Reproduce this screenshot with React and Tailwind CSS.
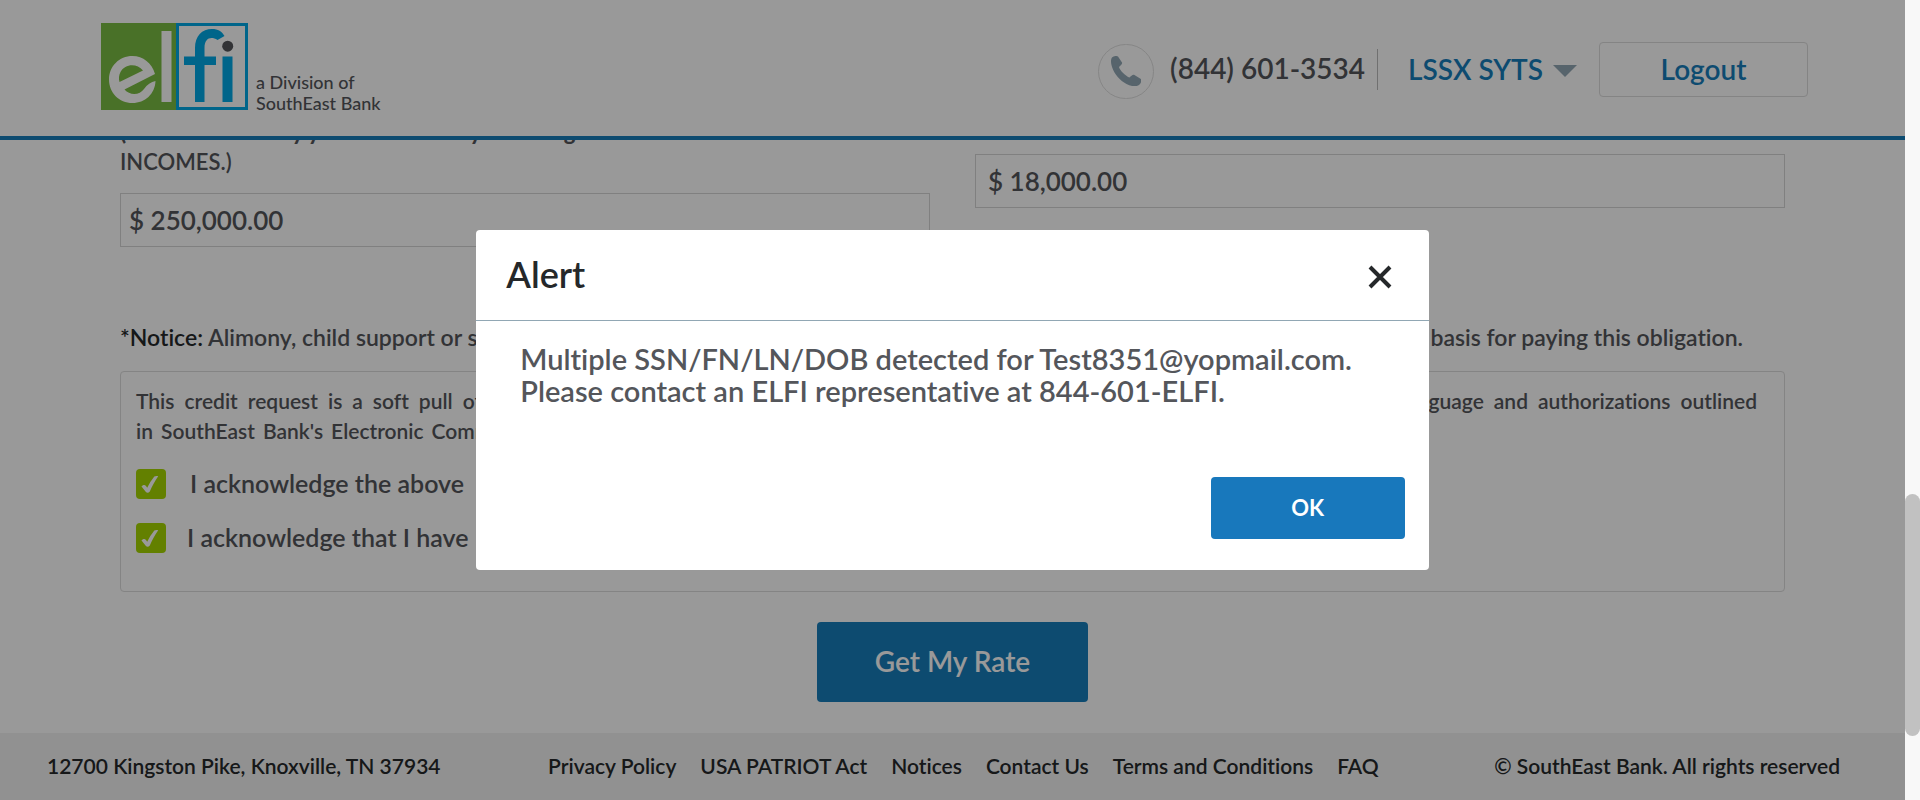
function Logo() {
  return (
    <svg viewBox="0 0 147 87" className="h-[87px] w-[147px] shrink-0" role="img" aria-label="elfi">
      <rect x="0" y="0" width="76" height="87" fill="#7bbc43" />
      <rect x="76.5" y="1.5" width="69" height="84" fill="#fff" stroke="#00a8e6" strokeWidth="3" />
      <rect x="60.5" y="8" width="10" height="71" fill="#fff" />
      <path
        fillRule="evenodd"
        fill="#fff"
        d="M31.500 33 C42 33 51 40 54 51 L23.500 66.500 C29 73 39 72 43 66 C46 61.500 50 59 54.500 58 C54 71 44 80 31.500 80 C18 80 8 69.500 8 56.500 C8 43.500 18 33 31.500 33 Z M18.500 59 L42 47.500 C36 40 24 40.500 19.500 49 C17.800 52.500 17.600 55.500 18.500 59 Z"
      />
      <path
        fill="#00a8e6"
        d="M94 79 V42 H83 V33.500 H94 V25 C94 13 101 6 111 6 C117 6 121 8.500 123.500 13 L116.500 17 C110 13 103.500 15 103.500 25 V33.500 H115 V42 H103.500 V79 Z"
      />
      <rect x="121.500" y="33.500" width="10" height="45.500" fill="#00a8e6" />
      <circle cx="126.700" cy="23.200" r="5.500" fill="#54565b" />
    </svg>
  );
}

function Acknowledge({ id, label, gap }) {
  return (
    <div className="flex items-center">
      <span className="relative flex size-[30px] shrink-0">
        <input id={id} type="checkbox" defaultChecked className="size-[30px] appearance-none rounded bg-[#a5d500]" />
        <svg viewBox="0 0 30 30" className="pointer-events-none absolute inset-0 size-[30px]" aria-hidden="true">
          <path d="M5.500 17.500 C7 15.600 8.800 15.500 10 17 L11.200 18.700 C13.300 14.500 15.500 11 18.300 7.500 C19.500 6.800 20.800 6.800 22.200 7.200 C18.700 12.300 16.200 17 13.800 22.500 C12.500 24.200 10.800 24.200 9.700 22.700 Z" fill="#fff" />
        </svg>
      </span>
      <label htmlFor={id} className={gap + ' pb-0.5 text-[25px] leading-7 whitespace-nowrap'}>{label}</label>
    </div>
  );
}

const links = ['Privacy Policy', 'USA PATRIOT Act', 'Notices', 'Contact Us', 'Terms and Conditions', 'FAQ'];

export default function App() {
  return (
    <div className="flex h-screen overflow-hidden bg-white font-['Lato','Liberation_Sans',sans-serif] font-semibold text-[#54565b] [font-variant-ligatures:none]">
      <div className="relative flex min-w-0 flex-1 flex-col">
        <header className="relative z-10 flex h-[140px] shrink-0 items-start justify-between border-b-4 border-[#177dbb] bg-white pr-[97px] pl-[101px]">
          <a href="#home" className="flex items-start gap-2 pt-[23px]">
            <Logo />
            <span className="pt-[49px] text-[18px] leading-[21px] font-medium whitespace-nowrap">
              a Division of
              <br />
              SouthEast Bank
            </span>
          </a>
          <div className="mt-[41px] flex h-14 items-center">
            <span className="mt-1 flex h-[55px] w-14 items-center justify-center rounded-full border border-[#dfdfdf]">
              <svg viewBox="0 0 30 30" className="size-[30px]" fill="#91a7b4" aria-hidden="true">
                <path d="M1 1.500 C2.500 0 5.500 -0.500 7 0.500 L11 6.500 C11.700 8 9.500 9.500 8 11 C8.500 14 15 20.500 18.500 21.500 C20 20 21.500 18.300 23 18.700 L29.500 22.700 C31 24 30.300 27 28 29 C25.500 31 20 30.500 15.500 28 C9 24.500 3.500 18.500 1.200 11.500 C-0.200 7.500 -0.500 3.500 1 1.500 Z" />
              </svg>
            </span>
            <a href="tel:8446013534" className="ml-4 pb-0.5 text-[28px] leading-8 whitespace-nowrap">(844) 601-3534</a>
            <span className="ml-3 h-[41px] w-px bg-[#bbb]" />
            <button type="button" className="ml-[30px] flex items-center gap-2.5 text-[28px] leading-8 whitespace-nowrap text-[#177dbb]">
              LSSX SYTS
              <svg viewBox="0 0 24 12" className="mt-1 h-3 w-6" aria-hidden="true">
                <path d="M0 0h24L12 12z" fill="#91a7b4" />
              </svg>
            </button>
            <button type="button" className="ml-[22px] h-[55px] w-[209px] rounded border border-[#dcdcdc] text-[28px] leading-8 text-[#177dbb]">
              Logout
            </button>
          </div>
        </header>

        <main className="flex flex-1 flex-col px-[120px]">
          <div className="-mt-[23px] grid grid-cols-2 gap-x-[45px]">
            <div>
              <label htmlFor="income" className="block text-[22px] leading-[30px]">
                <b>(Please add money you earn annually including</b>
                <br />
                INCOMES.)
              </label>
              <input id="income" defaultValue="$ 250,000.00" className="mt-4 h-[54px] w-full border border-[#d5d5d5] px-2 text-[26px]" />
            </div>
            <div className="pt-[37px]">
              <input aria-label="Monthly payment" defaultValue="$ 18,000.00" className="h-[54px] w-full border border-[#d5d5d5] px-3 text-[26px]" />
            </div>
          </div>

          <div className="mt-[75px] flex justify-between pr-[42px] text-[23px] leading-[30px] whitespace-nowrap">
            <p>
              <span className="text-[#25282a]">*Notice:</span> Alimony, child support or separate
            </p>
            <p>basis for paying this obligation.</p>
          </div>

          <section className="mt-[19px] rounded border border-[#dcdcdc] px-[15px] pt-3.5 pb-[38px]">
            <p className="pr-3 text-[21px] leading-[30px] [text-align-last:justify]">
              This credit request is a soft pull of your credit and will not impact your credit score. By submitting this form you agree to the language and authorizations outlined
              <span className="block w-[32%]">in SouthEast Bank's Electronic Communications policy.</span>
            </p>
            <div className="mt-[23px] flex flex-col gap-6">
              <Acknowledge id="ack-above" label="I acknowledge the above" gap="ml-6" />
              <Acknowledge id="ack-read" label="I acknowledge that I have" gap="ml-[21px]" />
            </div>
          </section>

          <button type="button" className="mt-[30px] h-20 w-[271px] self-center rounded bg-[#177dbb] pb-0.5 text-[28px] text-white">
            Get My Rate
          </button>
        </main>

        <footer className="flex h-[67px] shrink-0 items-center justify-between bg-[#f2f2f2] pr-[65px] pb-0.5 pl-[47px] text-[21px] leading-[30px] whitespace-nowrap text-[#25282a]">
          <span>12700 Kingston Pike, Knoxville, TN 37934</span>
          <nav className="flex gap-6 pr-2">
            {links.map((l) => (
              <a key={l} href="#footer">{l}</a>
            ))}
          </nav>
          <span>© SouthEast Bank. All rights reserved</span>
        </footer>

        <div className="absolute inset-0 z-20 flex items-center justify-center bg-black/40">
          <div role="dialog" aria-modal="true" aria-labelledby="alert-title" className="w-1/2 rounded bg-white">
            <div className="flex h-[91px] items-center justify-between border-b border-[#91a7b4] pr-[37px] pl-[30px] text-[#25282a]">
              <h2 id="alert-title" className="pb-0.5 text-4xl">Alert</h2>
              <button type="button" aria-label="Close" className="mt-1 flex size-6 items-center justify-center">
                <svg viewBox="0 0 24 24" className="size-6" stroke="#25282a" strokeWidth="4" aria-hidden="true">
                  <path d="M2 2l20 20M22 2L2 22" />
                </svg>
              </button>
            </div>
            <p className="h-[156px] px-11 pt-[22px] text-[29px] leading-8">
              Multiple SSN/FN/LN/DOB detected for Test8351@yopmail.com. Please contact an ELFI representative at 844-601-ELFI.
            </p>
            <div className="flex justify-end px-6 pb-[31px]">
              <button type="button" className="h-[62px] w-[194px] rounded bg-[#1878bc] pb-0.5 text-[22px] font-bold text-white">OK</button>
            </div>
          </div>
        </div>
      </div>
      <div className="w-[15px] shrink-0 bg-[#f8f8f8] pt-[494px]">
        <div className="h-[242px] rounded-full bg-[#c1c1c1]" />
      </div>
    </div>
  );
}
